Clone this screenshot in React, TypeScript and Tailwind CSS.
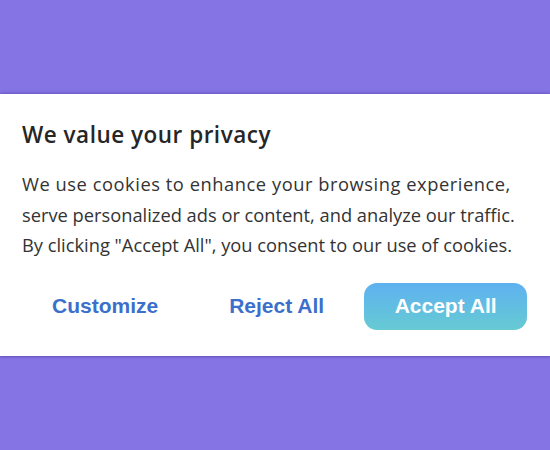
export default function App() {
  return (
    <div className="w-[550px] h-[450px] bg-[#8574e4] flex flex-col justify-start overflow-hidden" style={{ fontFamily: "'Open Sans', sans-serif" }}>
      <div className="mt-[94px] h-[262px] bg-white shadow-[0_-1px_3px_rgba(60,40,140,0.35),0_1px_2px_rgba(60,40,140,0.4)] px-[22px] pt-[26px]">
        <h1 className="text-[22.5px] leading-[30px] font-semibold text-[#262626] tracking-[0.5px]">We value your privacy</h1>
        <div className="mt-[19px] text-[18.3px] leading-[30.5px] text-[#333333] whitespace-nowrap">
          <div className="tracking-[0.55px]">We use cookies to enhance your browsing experience,</div>
          <div className="tracking-[0px]">serve personalized ads or content, and analyze our traffic.</div>
          <div className="tracking-[0px]">By clicking "Accept All", you consent to our use of cookies.</div>
        </div>
        <div className="mt-[22px] flex items-center whitespace-nowrap">
          <button className="ml-[30px] text-[21px] font-bold text-[#3c6fcc]" style={{ fontFamily: "'Liberation Sans', sans-serif" }}>Customize</button>
          <button className="ml-[71px] text-[21px] font-bold text-[#3c6fcc]" style={{ fontFamily: "'Liberation Sans', sans-serif" }}>Reject All</button>
          <button className="ml-[40px] w-[163px] h-[47px] rounded-[13px] bg-gradient-to-b from-[#5eb1f0] to-[#67cad3] text-white text-[21px] font-bold" style={{ fontFamily: "'Liberation Sans', sans-serif" }}>Accept All</button>
        </div>
      </div>
    </div>
  );
}
